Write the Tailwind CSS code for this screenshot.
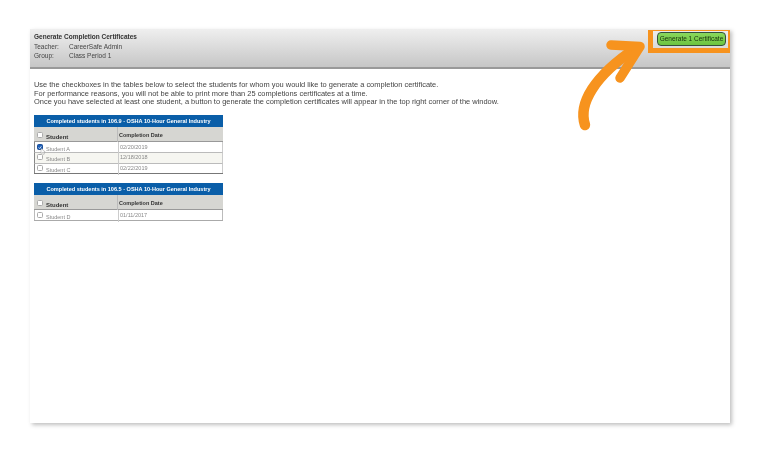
<!DOCTYPE html>
<html lang="en">
<head>
    <meta charset="UTF-8" />
    <title>Generate Completion Certificates</title>
    <script src="https://cdn.jsdelivr.net/npm/@tailwindcss/browser@4"></script>
</head>
<body class="relative w-[760px] h-[453px] overflow-hidden bg-white font-['Liberation_Sans',Arial,sans-serif] text-[#444]">
    <div class="ml-[30px] mt-[29px] w-[700px] h-[394px] bg-white shadow-[2px_2px_4px_rgba(0,0,0,0.25)] blur-[0.4px]">
        <!-- header -->
        <div class="flex justify-between h-[40px] px-1 pt-[3px] bg-linear-to-b from-[#efefef] to-[#c6c6c6] border-b-2 border-[#999]">
            <div>
                <div class="text-[6.5px] leading-[9px] font-bold text-[#333]">Generate Completion Certificates</div>
                <div class="flex mt-[1px] text-[6.5px] leading-[9px]"><span class="w-[35px]">Teacher:</span><span>CareerSafe Admin</span></div>
                <div class="flex text-[6.5px] leading-[9px]"><span class="w-[35px]">Group:</span><span>Class Period 1</span></div>
            </div>
            <button class="w-[69px] h-[14px] rounded-[4px] border border-[#34503a] bg-linear-to-b from-[#8ad85c] to-[#6cc43f] text-[6.5px] text-[#16300c] whitespace-nowrap">Generate 1 Certificate</button>
        </div>

        <div class="px-1 pt-[12px]">
            <p class="text-[7.45px] leading-[8.7px]">Use the checkboxes in the tables below to select the students for whom you would like to generate a completion certificate.<br />For performance reasons, you will not be able to print more than 25 completions certificates at a time.<br />Once you have selected at least one student, a button to generate the completion certificates will appear in the top right corner of the window.</p>

            <!-- first table -->
            <div class="w-[189px] mt-[8px] border-b border-[#777]">
                <div class="h-[12px] bg-[#0a5ea8] text-white text-[5.55px] leading-[12px] font-bold text-center">Completed students in 106.9 - OSHA 10-Hour General Industry</div>
                <div class="grid grid-cols-[84px_105px] h-[15px] bg-[#d6d6d2] border-b border-[#999] text-[5.5px] font-bold text-[#333]">
                    <div class="flex gap-[3px] pl-[3px] pt-[5px] border-r border-[#bbb]"><span class="w-[6px] h-[6px] bg-white border border-[#aaa] rounded-[1.5px]"></span><span class="pt-[1px] text-[6px]">Student</span></div>
                    <div class="pl-[1px] pt-[4px]">Completion Date</div>
                </div>
                <div class="grid grid-cols-[84px_105px] h-[10px] bg-white border-l border-r border-l-[#888] border-r-[#ccc] text-[5.5px] leading-[9px] text-[#888]">
                    <div class="flex gap-[3px] pl-[2px] pt-[2px] border-r border-[#ccc]">
                        <span class="flex items-center justify-center w-[6px] h-[6px] bg-[#1d5fb8] border border-[#1d4f98] rounded-[1.5px]">
                            <svg width="5" height="5" viewBox="0 0 6 6" fill="none"><path d="M1 3L2.500 4.500L5 1.200" stroke="#fff" stroke-width="1.200" /></svg>
                        </span>
                        <span class="pt-[1px]">Student A</span>
                    </div>
                    <div class="pl-[1px] pt-[1px]">02/20/2019</div>
                </div>
                <div class="grid grid-cols-[84px_105px] h-[11px] bg-[#f6f6f1] border-l border-r border-t border-l-[#888] border-r-[#ccc] border-t-[#bbb] text-[5.5px] leading-[9px] text-[#888]">
                    <div class="flex gap-[3px] pl-[2px] pt-[1px] border-r border-[#ccc]"><span class="w-[6px] h-[6px] bg-white border border-[#aaa] rounded-[1.5px]"></span><span class="pt-[1px]">Student B</span></div>
                    <div class="pl-[1px]">12/18/2018</div>
                </div>
                <div class="grid grid-cols-[84px_105px] h-[10px] bg-white border-l border-r border-t border-l-[#888] border-r-[#ccc] border-t-[#bbb] text-[5.5px] leading-[9px] text-[#888]">
                    <div class="flex gap-[3px] pl-[2px] pt-[1px] border-r border-[#ccc]"><span class="w-[6px] h-[6px] bg-white border border-[#aaa] rounded-[1.5px]"></span><span class="pt-[1px]">Student C</span></div>
                    <div class="pl-[1px]">02/22/2019</div>
                </div>
            </div>

            <!-- second table -->
            <div class="w-[189px] mt-[9px] border-b border-[#aaa]">
                <div class="h-[12px] bg-[#0a5ea8] text-white text-[5.55px] leading-[12px] font-bold text-center">Completed students in 106.5 - OSHA 10-Hour General Industry</div>
                <div class="grid grid-cols-[84px_105px] h-[15px] bg-[#d6d6d2] border-b border-[#999] text-[5.5px] font-bold text-[#333]">
                    <div class="flex gap-[3px] pl-[3px] pt-[5px] border-r border-[#bbb]"><span class="w-[6px] h-[6px] bg-white border border-[#aaa] rounded-[1.5px]"></span><span class="pt-[1px] text-[6px]">Student</span></div>
                    <div class="pl-[1px] pt-[4px]">Completion Date</div>
                </div>
                <div class="grid grid-cols-[84px_105px] h-[10px] bg-white border-l border-r border-[#bbb] text-[5.5px] leading-[9px] text-[#888]">
                    <div class="flex gap-[3px] pl-[2px] pt-[2px] border-r border-[#ccc]"><span class="w-[6px] h-[6px] bg-white border border-[#aaa] rounded-[1.5px]"></span><span class="pt-[1px]">Student D</span></div>
                    <div class="pl-[1px] pt-[1px]">01/11/2017</div>
                </div>
            </div>
        </div>
    </div>

    <!-- mouse pointer over the ticked box -->
    <svg class="absolute left-[40px] top-[148px] blur-[0.3px]" width="6" height="7" viewBox="0 0 6 7"><path d="M1 0.500L1 5.500L2.400 4.400L3.500 6.500L4.500 6L3.500 4L5.200 3.800Z" fill="#fff" stroke="#999" stroke-width="0.500" /></svg>

    <!-- callout overlay -->
    <div class="absolute left-[648px] top-[30px] w-[82px] h-[23px] border-l-[5px] border-r-[2px] border-t-[1px] border-b-[5px] border-[#f7931e] blur-[0.3px]"></div>
    <svg class="absolute left-0 top-0 blur-[0.3px]" width="760" height="453" viewBox="0 0 760 453" fill="none">
        <path d="M585 125C578 104 594 76 636 48" stroke="#f7931e" stroke-width="10.500" stroke-linecap="round" />
        <path d="M611 45L640 46.500L620 78" stroke="#f7931e" stroke-width="9.500" stroke-linecap="round" stroke-linejoin="round" />
    </svg>
</body>
</html>
